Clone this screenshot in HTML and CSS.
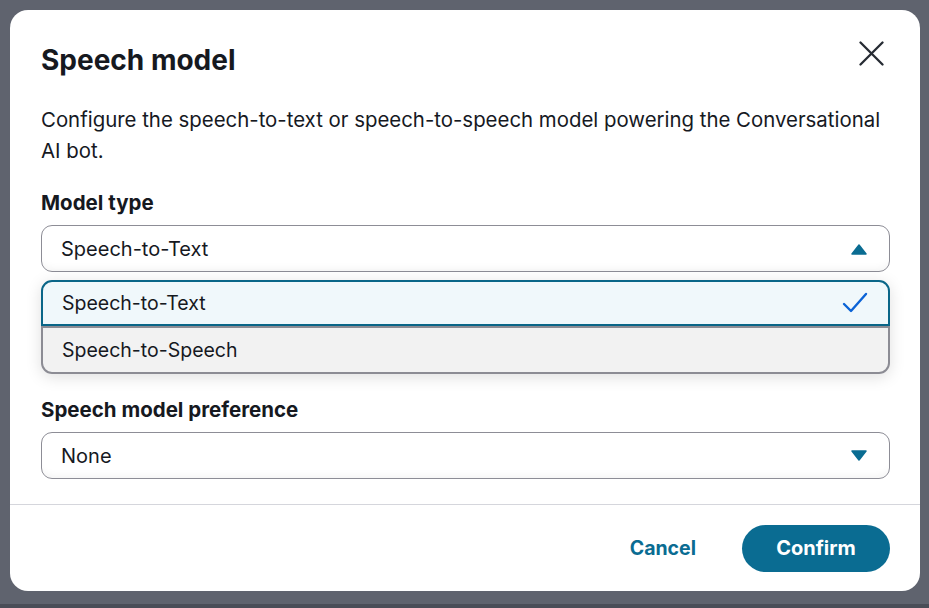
FILE: index.html
```html
<!DOCTYPE html>
<html lang="en">
<head>
<meta charset="utf-8">
<title>Speech model</title>
<link rel="stylesheet" href="styles.css">
</head>
<body>
<div class="backdrop">
  <div class="modal" role="dialog" aria-labelledby="title">
    <div class="modal-body">
      <div class="header">
        <h2 id="title" class="title">Speech model</h2>
        <button class="close" aria-label="Close">
          <svg width="25" height="25" viewBox="0 0 25 25"><path d="M1.5 1.5 L23.5 23.5 M23.5 1.5 L1.5 23.5" stroke="#262b33" stroke-width="2.3" stroke-linecap="round" fill="none"/></svg>
        </button>
      </div>
      <p class="desc">Configure the speech-to-text or speech-to-speech model powering the Conversational AI bot.</p>

      <div class="field">
        <label class="label">Model type</label>
        <div class="select open">
          <span>Speech-to-Text</span>
          <svg class="caret" width="16" height="12" viewBox="0 0 16 12"><path d="M1 11 L8 2 L15 11 Z" fill="#0a6c92" stroke="#0a6c92" stroke-width="1.5" stroke-linejoin="round"/></svg>
        </div>
        <ul class="menu">
          <li class="option selected">
            <span>Speech-to-Text</span>
            <svg width="26" height="22" viewBox="0 0 26 22"><path d="M2 12 L9 19 L24 2" stroke="#0b63d6" stroke-width="2.4" fill="none" stroke-linecap="round" stroke-linejoin="round"/></svg>
          </li>
          <li class="option hovered"><span>Speech-to-Speech</span></li>
        </ul>
      </div>

      <div class="field field-2">
        <label class="label">Speech model preference</label>
        <div class="select">
          <span>None</span>
          <svg class="caret" width="16" height="12" viewBox="0 0 16 12"><path d="M1 1 L8 10 L15 1 Z" fill="#0a6c92" stroke="#0a6c92" stroke-width="1.5" stroke-linejoin="round"/></svg>
        </div>
      </div>
    </div>
    <div class="footer">
      <button class="btn-link">Cancel</button>
      <button class="btn-primary">Confirm</button>
    </div>
  </div>
</div>
</body>
</html>
```

FILE: styles.css
```css
* { box-sizing: border-box; }
html, body { margin: 0; padding: 0; }
body {
  width: 929px;
  height: 608px;
  background: #5f636e;
  font-family: "Inter", "Open Sans", sans-serif;
  color: #16191f;
  overflow: hidden;
}
.backdrop {
  padding: 10px 9px 0 10px;
  height: 608px;
  border-bottom: 4px solid #4a4d57;
}
.modal {
  width: 910px;
  height: 581px;
  background: #ffffff;
  border-radius: 18px;
  display: flex;
  flex-direction: column;
}
.modal-body {
  padding: 34px 31px 0 31px;
  flex: 1;
}
.header {
  display: flex;
  justify-content: space-between;
  align-items: flex-start;
}
.title {
  margin: 0;
  font-size: 28px;
  line-height: 32px;
  font-weight: 700;
}
.close {
  border: 0;
  background: none;
  padding: 0;
  margin: -3px 5px 0 0;
  display: flex;
}
.desc {
  margin: 28px 0 0 0;
  font-size: 20.4px;
  line-height: 31px;
  width: 840px;
}
.field { margin-top: 25px; }
.field-2 { margin-top: 24px; }
.label {
  display: block;
  font-size: 20.5px;
  font-weight: 700;
  line-height: 24px;
  margin-bottom: 10px;
}
.select {
  height: 47px;
  width: 849px;
  border: 1.5px solid #8d8d96;
  border-radius: 11px;
  display: flex;
  align-items: center;
  justify-content: space-between;
  padding: 0 22px 0 19px;
  font-size: 20px;
  box-shadow: inset 0 -8px 8px -6px rgba(0,0,0,0.05);
}
.menu {
  list-style: none;
  margin: 8px 0 0 0;
  padding: 0;
  width: 849px;
  border-radius: 11px;
  box-shadow: 0 3px 16px rgba(0,0,0,0.13);
}
.option {
  display: flex;
  align-items: center;
  justify-content: space-between;
  font-size: 19.5px;
  padding: 0 20px 0 19px;
}
.option.selected {
  height: 46px;
  background: #f0f8fb;
  border: 2px solid #0a6688;
  border-radius: 11px 11px 0 0;
}
.option.hovered {
  height: 48px;
  background: #f2f2f2;
  border: 2px solid #8c8c94;
  border-radius: 0 0 11px 11px;
}
.footer {
  border-top: 1.5px solid #d5d6dc;
  height: 87px;
  display: flex;
  justify-content: flex-end;
  align-items: center;
  gap: 46px;
  padding: 0 30px 0 0;
}
.btn-link {
  border: 0;
  background: none;
  font-family: inherit;
  font-size: 19.5px;
  font-weight: 700;
  color: #0a6c92;
  padding: 0;
}
.btn-primary {
  border: 0;
  width: 148px;
  height: 47px;
  border-radius: 24px;
  background: #0a6c92;
  color: #fff;
  font-family: inherit;
  font-size: 20px;
  font-weight: 700;
}
```
